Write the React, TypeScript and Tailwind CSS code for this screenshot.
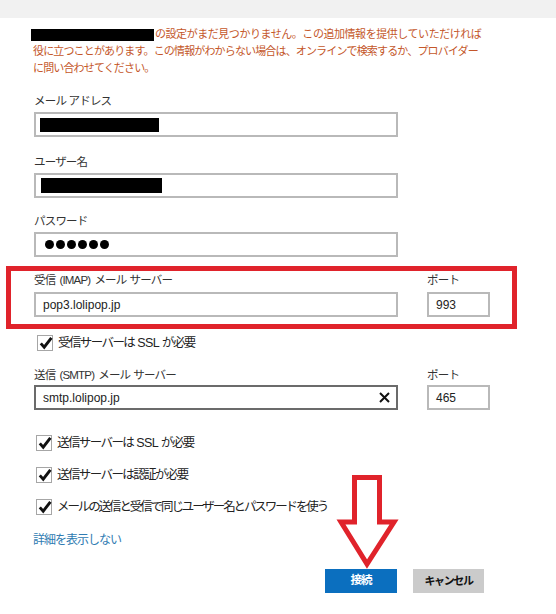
import React from "react";

const font = "font-['Liberation_Sans','Noto_Sans_CJK_JP',sans-serif]";

const Check: React.FC<{ children: React.ReactNode; tight?: boolean }> = ({ children, tight }) => (
	<div className="flex items-center h-[16px]">
		<div className="relative w-[16px] h-[16px] border border-[#a6a6a6] bg-white shrink-0">
			<svg className="absolute left-[1px] top-[0px]" width="14" height="14" viewBox="0 0 14 14">
				<path d="M1.8 7.4 L5.2 11.2 L12.4 1.8" fill="none" stroke="#111" strokeWidth="2.9" strokeLinejoin="miter" />
			</svg>
		</div>
		<span
			className={
				"ml-[5px] text-[12.5px] text-[#222] leading-[16px] whitespace-nowrap " +
				(tight ? "tracking-[-2.1px]" : "tracking-[-1.6px]")
			}
		>
			{children}
		</span>
	</div>
);

const Label: React.FC<{ children: React.ReactNode; className?: string }> = ({ children, className }) => (
	<div className={"h-[16px] leading-[16px] text-[11.5px] tracking-[-0.8px] text-[#333] whitespace-nowrap " + (className ?? "")}>
		{children}
	</div>
);

const Ssl = () => <span className="mx-[3px] tracking-[-0.6px]">SSL</span>;

const App: React.FC = () => {
	return (
		<div className={"relative w-[556px] h-[614px] bg-white overflow-hidden " + font}>
			<div className="h-[18px] bg-[#f1f1f1]" />

			{/* message */}
			<div className="mt-[8px] pl-[31px] text-[11px] leading-[17px] tracking-[-0.85px] text-[#c4572a] whitespace-nowrap">
				<div className="flex items-center">
					<span className="inline-block w-[123px] h-[12px] bg-black mr-[1px]" />
					<span className="tracking-[-0.45px]">の設定がまだ見つかりません。この追加情報を提供していただければ</span>
				</div>
				<div className="pl-[2px]">役に立つことがあります。この情報がわからない場合は、オンラインで検索するか、プロバイダー</div>
				<div className="pl-[2px]">に問い合わせてください。</div>
			</div>

			<div className="pl-[34px]">
				<Label className="mt-[16px]">メール アドレス</Label>
				<div className="mt-[3px] w-[364px] h-[25px] border-2 border-[#b9b9b9] flex items-center pl-[4px]">
					<div className="w-[119px] h-[14px] bg-black" />
				</div>

				<Label className="mt-[17px]">ユーザー名</Label>
				<div className="mt-[3px] w-[364px] h-[25px] border-2 border-[#b9b9b9] flex items-center pl-[5px]">
					<div className="w-[121px] h-[15px] bg-black" />
				</div>

				<Label className="mt-[15px]">パスワード</Label>
				<div className="mt-[3px] w-[364px] h-[25px] border-2 border-[#b9b9b9] flex items-center pl-[9px] gap-[2px]">
					{[0, 1, 2, 3, 4, 5].map((i) => (
						<div key={i} className="w-[9px] h-[9px] rounded-full bg-black" />
					))}
				</div>
			</div>

			{/* highlighted incoming server */}
			<div className="mt-[9px] ml-[6px] w-[511px] border-[5px] border-[#e0232b] pl-[23px] pt-[1px] pb-[7px]">
				<div className="flex">
					<Label className="w-[393px]">
						受信<span className="mx-[4px]">(IMAP)</span>メール<span className="ml-[3px]">サーバー</span>
					</Label>
					<Label>ポート</Label>
				</div>
				<div className="mt-[4px] flex gap-[29px]">
					<div className="w-[364px] h-[25px] border-2 border-[#b9b9b9] flex items-center pl-[7px] text-[12px] text-[#222]">
						pop3.lolipop.jp
					</div>
					<div className="w-[63px] h-[25px] border-2 border-[#b9b9b9] flex items-center pl-[7px] text-[12px] text-[#222]">
						993
					</div>
				</div>
			</div>

			<div className="pl-[37px] mt-[6px]">
				<Check>
					受信サーバーは<Ssl />が必要
				</Check>
			</div>

			<div className="pl-[34px]">
				<div className="flex mt-[16px]">
					<Label className="w-[393px]">
						送信<span className="mx-[4px]">(SMTP)</span>メール<span className="ml-[3px]">サーバー</span>
					</Label>
					<Label>ポート</Label>
				</div>
				<div className="mt-[2px] flex gap-[29px]">
					<div className="w-[364px] h-[25px] border-2 border-[#6b6b6b] flex items-center pl-[7px] pr-[6px] text-[12px] text-[#222]">
						<span className="flex-1">smtp.lolipop.jp</span>
						<svg width="11" height="11" viewBox="0 0 11 11">
							<path d="M1 1 L10 10 M10 1 L1 10" stroke="#111" strokeWidth="2" />
						</svg>
					</div>
					<div className="w-[63px] h-[25px] border-2 border-[#b9b9b9] flex items-center pl-[7px] text-[12px] text-[#222]">
						465
					</div>
				</div>
			</div>

			<div className="pl-[36px] mt-[25px] flex flex-col gap-[16px]">
				<Check>
					送信サーバーは<Ssl />が必要
				</Check>
				<Check>送信サーバーは認証が必要</Check>
				<Check tight>メールの送信と受信で同じユーザー名とパスワードを使う</Check>
			</div>

			<div className="pl-[33px] mt-[17px] h-[16px] leading-[16px] text-[12px] tracking-[-1px] text-[#2f7bb2]">
				詳細を表示しない
			</div>

			<div className="mt-[21px] flex justify-end pr-[72px] gap-[16px]">
				<button className="w-[72px] h-[24px] bg-[#0b6fbf] text-white text-[11.5px] font-bold tracking-[-1px]">
					接続
				</button>
				<button className="w-[71px] h-[24px] bg-[#cbcbcb] text-[#111] text-[11px] font-bold tracking-[-1.4px]">
					キャンセル
				</button>
			</div>

			{/* red annotation arrow */}
			<svg className="absolute left-[336px] top-[472px]" width="66" height="100" viewBox="336 472 66 100">
				<path
					d="M354.5 477.5 L379.5 477.5 L379.5 522 L394 522 L367 564 L341 522 L354.5 522 Z"
					fill="white"
					stroke="#e0232b"
					strokeWidth="5"
					strokeLinejoin="miter"
				/>
			</svg>
		</div>
	);
};

export default App;
